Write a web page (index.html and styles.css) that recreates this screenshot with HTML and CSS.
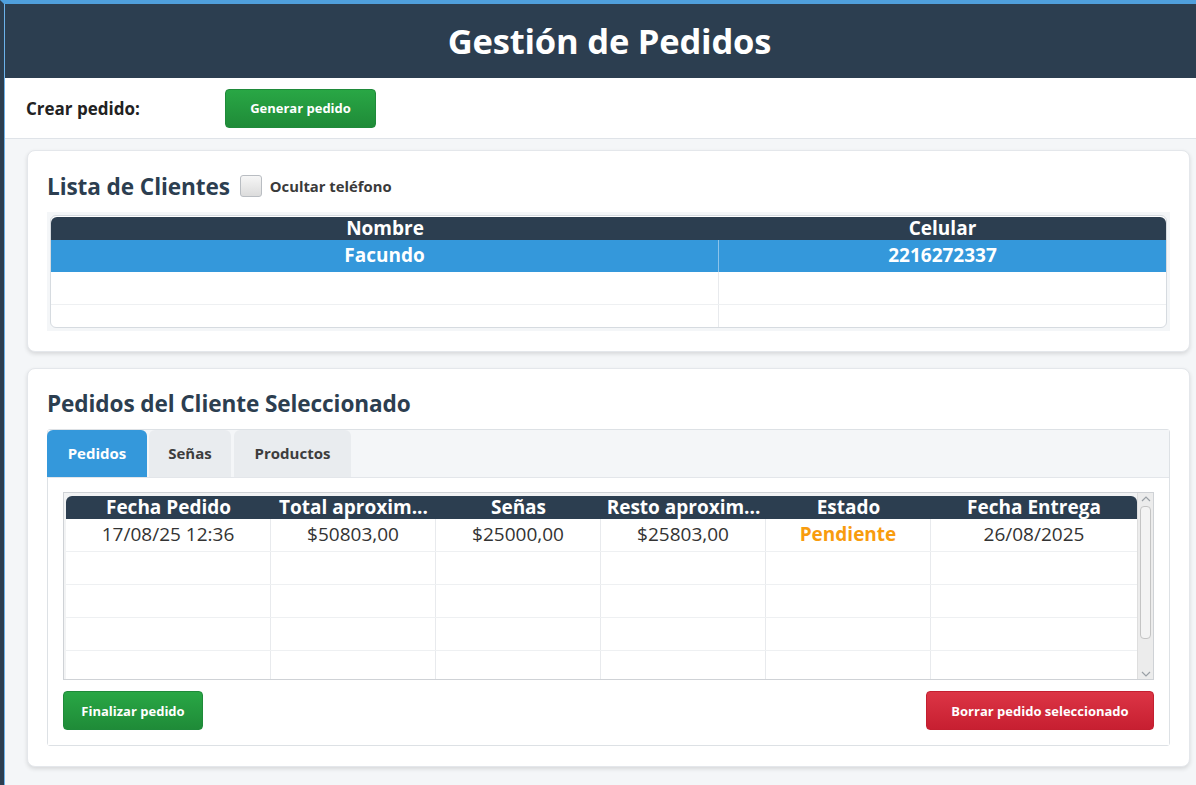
FILE: index.html
```html
<!DOCTYPE html>
<html lang="es">
<head>
<meta charset="utf-8">
<title>Gestión de Pedidos</title>
<link rel="stylesheet" href="styles.css">
</head>
<body>
<div class="window">
  <header class="app-header">
    <h1 class="app-title">Gestión de Pedidos</h1>
  </header>
  <div class="toolbar">
    <span class="toolbar-label">Crear pedido:</span>
    <button class="btn btn-green btn-generate">Generar pedido</button>
  </div>
  <main class="main">
    <section class="card card-clients">
      <div class="card-title-row">
        <h2 class="card-title">Lista de Clientes</h2>
        <label class="check">
          <span class="check-box"></span>
          <span class="check-label">Ocultar teléfono</span>
        </label>
      </div>
      <div class="table-wrap">
        <div class="table clients-table">
          <div class="thead">
            <div class="th">Nombre</div>
            <div class="th">Celular</div>
          </div>
          <div class="tbody clients-body">
            <div class="tr selected">
              <div class="td">Facundo</div>
              <div class="td">2216272337</div>
            </div>
            <div class="tr">
              <div class="td"></div>
              <div class="td"></div>
            </div>
            <div class="tr">
              <div class="td"></div>
              <div class="td"></div>
            </div>
          </div>
        </div>
      </div>
    </section>

    <section class="card card-orders">
      <h2 class="card-title orders-title">Pedidos del Cliente Seleccionado</h2>
      <div class="tabpane">
        <div class="tabs">
          <div class="tab active tab-pedidos">Pedidos</div>
          <div class="tab tab-senas">Señas</div>
          <div class="tab tab-productos">Productos</div>
        </div>
        <div class="tab-content">
          <div class="orders-table">
            <div class="orders-inner">
              <div class="thead orders-head">
                <div class="th">Fecha Pedido</div>
                <div class="th">Total aproxim...</div>
                <div class="th">Señas</div>
                <div class="th">Resto aproxim...</div>
                <div class="th">Estado</div>
                <div class="th">Fecha Entrega</div>
              </div>
              <div class="tbody orders-body">
                <div class="tr">
                  <div class="td">17/08/25 12:36</div>
                  <div class="td">$50803,00</div>
                  <div class="td">$25000,00</div>
                  <div class="td">$25803,00</div>
                  <div class="td status">Pendiente</div>
                  <div class="td">26/08/2025</div>
                </div>
                <div class="tr"><div class="td"></div><div class="td"></div><div class="td"></div><div class="td"></div><div class="td"></div><div class="td"></div></div>
                <div class="tr"><div class="td"></div><div class="td"></div><div class="td"></div><div class="td"></div><div class="td"></div><div class="td"></div></div>
                <div class="tr"><div class="td"></div><div class="td"></div><div class="td"></div><div class="td"></div><div class="td"></div><div class="td"></div></div>
                <div class="tr"><div class="td"></div><div class="td"></div><div class="td"></div><div class="td"></div><div class="td"></div><div class="td"></div></div>
              </div>
            </div>
            <div class="scrollbar">
              <svg class="sb-arrow" width="10" height="6" viewBox="0 0 10 6"><path d="M1 5 L5 1 L9 5" fill="none" stroke="#9aa0a6" stroke-width="1.2"/></svg>
              <div class="sb-track"><div class="sb-thumb"></div></div>
              <svg class="sb-arrow" width="10" height="6" viewBox="0 0 10 6"><path d="M1 1 L5 5 L9 1" fill="none" stroke="#9aa0a6" stroke-width="1.2"/></svg>
            </div>
          </div>
          <div class="actions">
            <button class="btn btn-green btn-finalize">Finalizar pedido</button>
            <button class="btn btn-red btn-delete">Borrar pedido seleccionado</button>
          </div>
        </div>
      </div>
    </section>
  </main>
</div>
</body>
</html>
```

FILE: styles.css
```css
* { box-sizing: border-box; }

html, body {
  margin: 0;
  padding: 0;
  height: 100%;
}

body {
  font-family: "Open Sans", "Noto Sans", "DejaVu Sans", sans-serif;
  background: #2c3e50;
  overflow: hidden;
}

.window {
  height: 785px;
  border-top: 4px solid #4f9fdc;
  border-left: 4px solid #2c3e50;
  display: flex;
  flex-direction: column;
  background: #f4f6f8;
  box-shadow: inset 1px 0 0 #6cb2ea;
}

.app-header {
  height: 74px;
  background: #2c3e50;
  display: flex;
  align-items: center;
  justify-content: center;
  margin-left: 1px;
}

.app-title {
  margin: 0;
  color: #ffffff;
  font-size: 34.5px;
  font-weight: 700;
  letter-spacing: -0.2px;
  padding-left: 18px;
  line-height: 40px;
}

.toolbar {
  height: 61px;
  background: #ffffff;
  border-bottom: 1px solid #dfe3e8;
  display: flex;
  align-items: center;
  padding-left: 21px;
  margin-left: 1px;
}

.toolbar-label {
  width: 199px;
  font-size: 17px;
  font-weight: 700;
  color: #222;
}

.btn {
  font-family: inherit;
  font-weight: 700;
  color: #ffffff;
  font-size: 13px;
  border-radius: 4px;
  height: 39px;
  cursor: pointer;
  padding: 0;
}

.btn-green {
  background: linear-gradient(#29a745, #1f8b38);
  border: 1px solid #1f8a3a;
}

.btn-red {
  background: linear-gradient(#dc3545, #c71f31);
  border: 1px solid #c41f30;
}

.btn-generate { width: 151px; }
.btn-finalize { width: 140px; }
.btn-delete { width: 228px; }

.main {
  flex: 1;
  padding: 11px 6px 0 22px;
  display: flex;
  flex-direction: column;
  gap: 16px;
  margin-left: 1px;
}

.card {
  background: #ffffff;
  border: 1px solid #e4e7eb;
  border-radius: 8px;
  box-shadow: 0 2px 4px rgba(0, 0, 0, 0.12);
  padding: 18px 19px 19px 19px;
}

.card-clients { height: 202px; }
.card-orders { height: 399px; padding-top: 19px; }

.card-title-row {
  display: flex;
  align-items: center;
  gap: 10px;
  height: 34px;
}

.card-title {
  margin: 0;
  font-size: 22.6px;
  font-weight: 700;
  color: #2c3e50;
  letter-spacing: -0.1px;
}

.orders-title {
  height: 32px;
  line-height: 32px;
  margin-bottom: 9px;
}

.check {
  display: flex;
  align-items: center;
  gap: 8px;
}

.check-box {
  width: 22px;
  height: 22px;
  border: 1px solid #b9bdc2;
  border-radius: 3px;
  background: linear-gradient(#f6f6f6, #dcdcdc);
}

.check-label {
  font-size: 14.8px;
  font-weight: 700;
  color: #3a3a3a;
}

.table-wrap {
  margin-top: 9px;
  background: #f4f6f8;
  padding: 3px;
  height: 119px;
}

.clients-table {
  border: 1px solid #d6dbe0;
  border-radius: 6px;
  overflow: hidden;
  background: #ffffff;
  height: 113px;
}

.thead {
  display: grid;
  background: #2c3e50;
  color: #ffffff;
  font-weight: 700;
  font-size: 19px;
  height: 23px;
  line-height: 22px;
  border-radius: 6px 6px 0 0;
}

.clients-table .thead,
.clients-table .tr {
  grid-template-columns: 668px 1fr;
}

.clients-table .thead { margin: 1px 0 0 0; }

.tr {
  display: grid;
  border-bottom: 1px solid #eef0f2;
}

.th {
  text-align: center;
  white-space: nowrap;
}

.td {
  text-align: center;
  border-right: 1px solid #e8eaed;
  white-space: nowrap;
  overflow: hidden;
}

.td:last-child { border-right: none; }

.clients-body { height: 87px; overflow: hidden; }

.clients-body .tr { height: 33px; line-height: 31px; }
.clients-body .tr:first-child { height: 32px; }

.tr.selected {
  background: #3498db;
  color: #ffffff;
  font-weight: 700;
  font-size: 19px;
  border-bottom: none;
}

.tr.selected .td { border-right: 1px solid #8cc3ea; }
.tr.selected .td:last-child { border-right: none; }

.tabpane {
  border: 1px solid #dde1e5;
  border-radius: 3px;
  height: 317px;
  display: flex;
  flex-direction: column;
}

.tabs {
  height: 48px;
  background: #f4f6f8;
  display: flex;
  gap: 2px;
  border-bottom: 1px solid #e3e6ea;
}

.tab {
  height: 47px;
  display: flex;
  align-items: center;
  justify-content: center;
  background: #e9ecef;
  border-radius: 6px 6px 0 0;
  font-size: 15px;
  font-weight: 700;
  color: #3d3d3d;
  padding-bottom: 2px;
}

.tab.active {
  background: #3498db;
  color: #ffffff;
}

.tab-pedidos { width: 100px; margin-left: -1px; }
.tab-senas { width: 82px; }
.tab-productos { width: 117px; margin-left: 1px; }

.tab-content {
  flex: 1;
  background: #ffffff;
  padding: 14px 15px 15px 15px;
  display: flex;
  flex-direction: column;
  gap: 11px;
}

.orders-table {
  height: 188px;
  border: 1px solid #cfd2d6;
  display: flex;
  background: #f2f3f4;
}

.orders-inner {
  flex: 1;
  padding: 3px 0 0 2px;
  display: flex;
  flex-direction: column;
}

.orders-head,
.orders-body .tr {
  grid-template-columns: 205fr 165fr 165fr 165fr 165fr 206fr;
}

.orders-body {
  flex: 1;
  overflow: hidden;
  background: #ffffff;
}

.orders-body .tr {
  height: 33px;
  line-height: 30px;
  font-size: 19px;
  color: #333;
}

.status {
  color: #f89c0e;
  font-weight: 700;
}

.scrollbar {
  width: 16px;
  background: #ececec;
  border-left: 1px solid #dedede;
  display: flex;
  flex-direction: column;
  align-items: center;
  padding: 3px 0 2px 0;
}

.sb-arrow { flex: none; }

.sb-track {
  flex: 1;
  width: 100%;
  padding: 4px 2px 0 2px;
}

.sb-thumb {
  height: 133px;
  border: 1px solid #c4c4c4;
  border-radius: 4px;
  background: #f3f3f3;
}

.actions {
  display: flex;
  justify-content: space-between;
}
```
